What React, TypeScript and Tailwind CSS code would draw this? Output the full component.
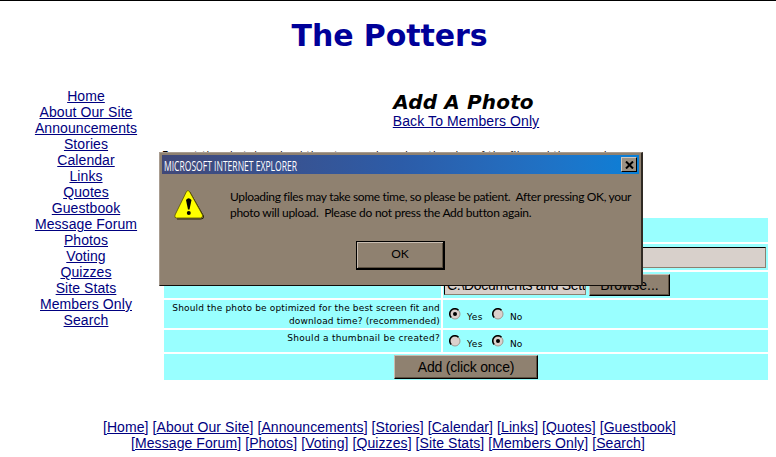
import { ReactNode } from "react";

const nav: string[] = [
  "Home", "About Our Site", "Announcements", "Stories", "Calendar", "Links", "Quotes", "Guestbook",
  "Message Forum", "Photos", "Voting", "Quizzes", "Site Stats", "Members Only", "Search",
];

function Radio({ on }: { on?: boolean }) {
  return (
    <svg className="size-3 shrink-0" viewBox="0 0 12 12">
      <circle cx="6" cy="6" r="5" fill="#dcd0cc" stroke="#a09890" />
      <path d="M2.200 9.500A5 5 0 0 1 9.500 2.200" fill="none" stroke="#000" strokeWidth="1.5" />
      {on && <circle cx="6" cy="6" r="2" fill="#000" />}
    </svg>
  );
}

function Choices({ first }: { first: boolean }) {
  return (
    <div className="flex h-3 items-start font-['DejaVu_Sans',sans-serif] text-[9px] leading-[16px]">
      <Radio on={first} />
      <span className="ml-[6px] mt-px w-[25px] tracking-[0.5px]">Yes</span>
      <Radio on={!first} />
      <span className="ml-[6px] mt-px">No</span>
    </div>
  );
}

function Button({ children, className }: { children: ReactNode; className: string }) {
  return (
    <button className={"flex items-center justify-center whitespace-nowrap border border-t-[#c8bcb0] border-l-[#c8bcb0] border-r-black border-b-black bg-[#8f8170] shadow-[inset_-1px_-1px_0_#5c5040] " + className}>
      {children}
    </button>
  );
}

function Dialog() {
  return (
    <div className="absolute left-[159px] top-[151px] h-[134px] w-[484px] border border-[#a89c90] border-r-2 border-r-[#302a24] border-b-[#100c08] bg-[#8f8170] p-[2px]">
      <div className="flex h-[19px] items-center justify-between bg-linear-to-r from-[#404878] via-[#2c5ca8] to-[#0880d8] pl-[2px] pr-[2px]">
        <span className="origin-left scale-x-[.57] whitespace-nowrap font-['Open_Sans',sans-serif] text-[15px] text-white">MICROSOFT INTERNET EXPLORER</span>
        <span className="flex h-[15px] w-4 items-center justify-center border border-t-[#d0c8c0] border-l-[#d0c8c0] border-r-black border-b-black bg-[#9c9284]">
          <svg className="h-[8px] w-[9px]" viewBox="0 0 9 8"><path d="M1 0.5 8 7.5M8 0.5 1 7.5" stroke="#000" strokeWidth="2" /></svg>
        </span>
      </div>
      <div className="flex pl-3 pt-[15px]">
        <svg className="h-8 w-8 shrink-0" viewBox="0 0 32 32">
          <path d="M15.500 2.500 29.500 27Q30 30 27 30H3" fill="none" stroke="#282400" strokeWidth="1" />
          <path d="M12.500 2.500Q14 .5 15.500 2.500L28.500 26Q29 29 26.500 29H2.500Q0 29 1 26Z" fill="#ff0" stroke="#585000" strokeWidth="0.8" />
          <path d="M12 11Q14.500 7.500 17.500 11L15.500 20.500H14Z" fill="#000" /><circle cx="14.800" cy="24" r="2" />
        </svg>
        <p className="ml-[24px] whitespace-pre font-['Lato',sans-serif] text-[12px] leading-4 text-black">
          <span className="tracking-[-0.33px]">Uploading files may take some time, so please be patient.  After pressing OK, your</span><br />
          <span className="tracking-[-0.28px]">photo will upload.  Please do not press the Add button again.</span>
        </p>
      </div>
      <button className="absolute left-[196px] top-[88px] h-[29px] w-[89px] border border-black border-r-2 border-b-2 bg-[#8f8170] pb-[3px] font-['Lato',sans-serif] text-[12px] shadow-[inset_1px_1px_0_#c8bcb0,inset_-1px_-1px_0_#5c5040]">OK</button>
    </div>
  );
}

export default function App() {
  return (
    <main className="relative h-[457px] w-[776px] overflow-hidden border-t border-black bg-white font-['Liberation_Sans',Arial,sans-serif] text-[14px] leading-4">
      <h1 className="flex h-[68px] items-center justify-center pl-[3px] pt-[2px] font-['DejaVu_Sans',sans-serif] text-[30px] font-bold tracking-[-0.1px] text-[#000099]"><span>The Potters</span></h1>
      <div className="flex h-[311px]">
        <nav className="flex w-[164px] flex-col items-center pl-2 pt-[19px] tracking-[0.08px] text-[#000080]">
          {nav.map((n) => <a key={n} className="h-4 whitespace-nowrap underline">{n}</a>)}
        </nav>
        <section className="w-[604px]">
          <header className="flex h-[82px] flex-col items-center pt-[23px]">
            <h2 className="h-[21px] pr-[5px] font-['DejaVu_Sans',sans-serif] text-[20px] font-bold italic leading-[21px] tracking-[0.15px]"><span>Add A Photo</span></h2>
            <a className="tracking-[0.1px] text-[#000080] underline"><span>Back To Members Only</span></a>
          </header>
          <p className="-ml-[2px] h-[67px] whitespace-nowrap font-['DejaVu_Sans',sans-serif] text-[10px] leading-[9px] tracking-[0.4px]"><span>Expect the photo's upload time to vary based on the size of the file and the speed.</span></p>
          <div className="grid grid-cols-[279px_1fr] grid-rows-[24px_26px_26px_28px_22px_26px] gap-y-[2px] text-[9px]">
            <div className="col-span-2 bg-[#99ffff]" />
            <div className="border-r-2 border-white bg-[#99ffff]" />
            <div className="bg-[#99ffff] pl-px pt-[3px]"><div className="h-[21px] w-[322px] border border-[#8c8070] border-t-black border-l-black bg-[#d8d0cb]" /></div>
            <div className="border-r-2 border-white bg-[#99ffff]" />
            <div className="flex gap-[3px] bg-[#99ffff] pl-px pt-[2px] text-[14px]">
              <div className="h-[21px] w-[142px] overflow-hidden whitespace-nowrap border border-[#8c8070] border-l-black bg-[#d8d0cb] pl-[2px] leading-[21px] tracking-[-0.3px]"><span>C:\Documents and Sett</span></div>
              <Button className="h-[22px] w-[81px]"><span>Browse...</span></Button>
            </div>
            <div className="border-r-2 border-white bg-[#99ffff] pr-px pt-[2px] text-right font-['DejaVu_Sans',sans-serif] leading-[13px] tracking-[0.16px]"><span>Should the photo be optimized for the best screen fit and</span><br /><span>download time? (recommended)</span></div>
            <div className="bg-[#99ffff] pl-[6px] pt-2"><Choices first={true} /></div>
            <div className="border-r-2 border-white bg-[#99ffff] pr-px pt-[2px] text-right font-['DejaVu_Sans',sans-serif] leading-[13px] tracking-[0.3px]"><span>Should a thumbnail be created?</span></div>
            <div className="bg-[#99ffff] pl-[6px] pt-[5px]"><Choices first={false} /></div>
            <div className="col-span-2 flex justify-center bg-[#99ffff] pt-px text-[14px] tracking-[-0.2px]"><Button className="h-[24px] w-[144px]"><span>Add (click once)</span></Button></div>
          </div>
        </section>
      </div>
      <footer className="pl-[3px] pt-[39px] text-center tracking-[0.08px] text-[#000080]">
        <p>{nav.slice(0, 8).map((n) => <span key={n}>[<u>{n}</u>] </span>)}</p>
        <p className="pr-[3px]">{nav.slice(8).map((n) => <span key={n}>[<u>{n}</u>] </span>)}</p>
      </footer>
      <Dialog />
    </main>
  );
}
